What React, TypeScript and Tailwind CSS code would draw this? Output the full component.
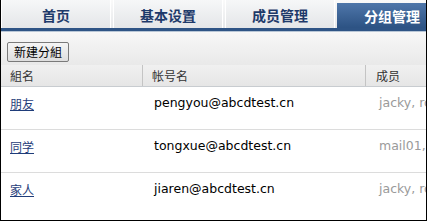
import React from "react";

const tabs = ["首页", "基本设置", "成员管理", "分组管理"];
const rows = [
  { name: "朋友", email: "pengyou@abcdtest.cn", members: "jacky, rose" },
  { name: "同学", email: "tongxue@abcdtest.cn", members: "mail01, mail02" },
  { name: "家人", email: "jiaren@abcdtest.cn", members: "jacky, rose" },
];

export default function App() {
  return (
    <div
      className="w-[427px] h-[221px] border-x border-b border-black bg-white overflow-hidden flex flex-col"
      style={{ fontFamily: '"DejaVu Sans", "Noto Sans CJK SC", sans-serif' }}
    >
      {/* Tabs */}
      <div className="h-[28px] flex bg-gradient-to-b from-[#fafafa] to-[#e6e8ea] overflow-hidden shrink-0">
        {tabs.map((t, i) => (
          <div
            key={t}
            className={
              i === 3
                ? "w-[110px] shrink-0 mt-[3px] flex items-center justify-center text-[14px] font-bold text-white bg-gradient-to-b from-[#4f77aa] to-[#2c5283]"
                : "w-[110px] shrink-0 mr-[2px] flex items-center justify-center text-[14px] font-bold text-[#1e3a6a] bg-gradient-to-b from-[#f6f7f8] to-[#e4e6e8] border-x border-white"
            }
            style={{ fontFamily: '"Noto Sans CJK SC", sans-serif' }}
          >
            <span className="pt-[2px]">{t}</span>
          </div>
        ))}
      </div>
      <div className="h-[3px] bg-[#2e5485] shrink-0" />
      <div className="h-px bg-[#b8c6d6] shrink-0" />
      {/* Toolbar */}
      <div className="h-[33px] flex items-center pl-[6px] bg-gradient-to-b from-[#f7f7f7] to-[#e9e9e9] shrink-0">
        <button
          className="h-[20px] px-[6px] mt-[6px] text-[12px] text-black bg-gradient-to-b from-[#f5f5f5] to-[#dedede] border border-[#7a7a7a] rounded-[2px] leading-none"
          style={{ fontFamily: '"Noto Sans CJK SC", sans-serif' }}
        >
          新建分組
        </button>
      </div>
      {/* Header */}
      <div
        className="h-[22px] flex items-center bg-gradient-to-b from-[#f0f0f0] to-[#e6e6e6] border-b border-[#c8ccd0] text-[12px] text-[#333] shrink-0"
        style={{ fontFamily: '"Noto Sans CJK SC", sans-serif' }}
      >
        <div className="w-[142px] h-full flex items-center pl-[9px] border-r border-[#c4c4c4]">組名</div>
        <div className="w-[223px] h-full flex items-center pl-[9px] border-r border-[#c4c4c4]">帐号名</div>
        <div className="flex-1 h-full flex items-center pl-[10px]">成员</div>
      </div>
      {/* Rows */}
      {rows.map((r, i) => (
        <div
          key={r.name}
          className={
            "h-[43px] flex items-start pt-[9px] shrink-0 " +
            (i < 2 ? "border-b border-[#dcdcdc]" : "")
          }
        >
          <div className="w-[143px] pl-[9px] leading-none">
            <a
              href="#"
              className="text-[12px] text-[#1f3d7a] underline"
              style={{ fontFamily: '"Noto Sans CJK SC", sans-serif' }}
            >
              {r.name}
            </a>
          </div>
          <div className="w-[224px] pl-[10px] text-[12.5px] leading-none text-black pt-[1px] whitespace-nowrap">{r.email}</div>
          <div className="flex-1 pl-[11px] text-[12.5px] leading-none text-[#9a9a9a] pt-[1px] whitespace-nowrap overflow-hidden">
            {r.members}
          </div>
        </div>
      ))}
    </div>
  );
}
